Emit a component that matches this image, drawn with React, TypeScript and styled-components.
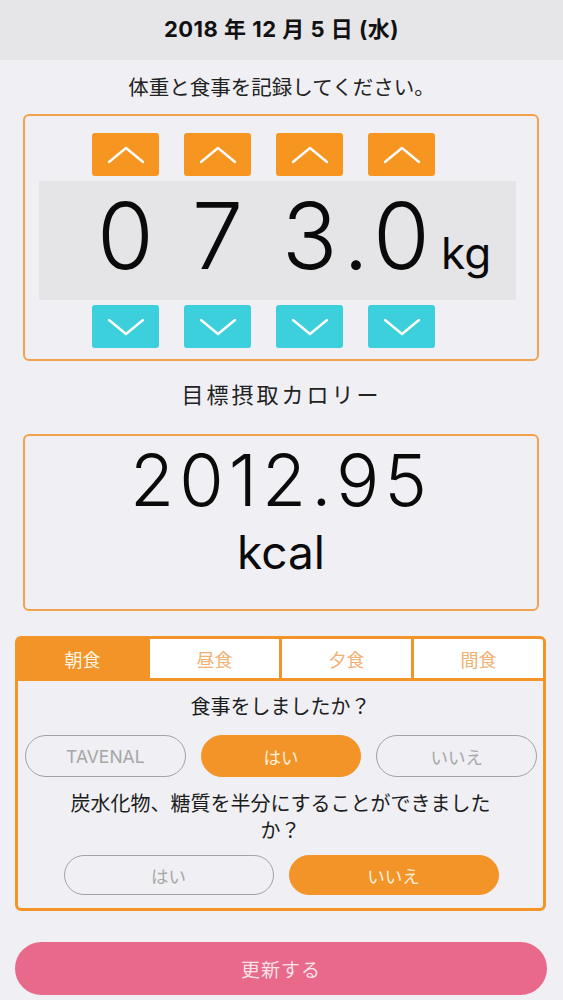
import styled, { createGlobalStyle } from 'styled-components'

// consts
const ORANGE = '#f6951f'
const ORANGE_BORDER = '#f1a24f'
const TAB_ORANGE = '#f39429'
const CYAN = '#3ccfdc'
const PINK = '#e9698b'
const PAGE_BG = '#efeff4'
const NUM_FONT = `"Inter", "Liberation Sans", sans-serif`
const JP_FONT = `"Inter", "Noto Sans CJK JP", sans-serif`

const GlobalStyle = createGlobalStyle`
  html, body {
    margin: 0;
    padding: 0;
    background: ${PAGE_BG};
  }

  body {
    font-family: ${JP_FONT};
    color: #1c1c1c;
  }

  * {
    box-sizing: border-box;
  }
`

const Page = styled.div`
  width: 563px;
  min-height: 1000px;
  background: ${PAGE_BG};
  display: flex;
  flex-direction: column;
`

const Header = styled.header`
  height: 60px;
  background: #e6e6e9;
  display: flex;
  align-items: center;
  justify-content: center;
  font-size: 22px;
  font-weight: 700;
  letter-spacing: 0.5px;
  padding-bottom: 6px;
  color: #111;
`

const Caption = styled.div<{ $size: number; $top: number; $spacing?: number }>`
  margin-top: ${(p) => p.$top}px;
  font-size: ${(p) => p.$size}px;
  line-height: 26px;
  letter-spacing: ${(p) => p.$spacing ?? 0}px;
  text-align: center;
  color: #222;
`

const WeightBox = styled.section`
  margin: 13px 24px 0 23px;
  border: 2px solid ${ORANGE_BORDER};
  border-radius: 6px;
  padding: 17px 21px 11px 14px;
  display: flex;
  flex-direction: column;
  gap: 5px;
`

const StepRow = styled.div`
  display: grid;
  grid-template-columns: repeat(4, 67px);
  column-gap: 25px;
  padding-left: 53px;
`

const StepButton = styled.button<{ $down?: boolean }>`
  height: 43px;
  border: none;
  border-radius: 3px;
  padding: 0;
  background: ${(p) => (p.$down ? CYAN : ORANGE)};
  display: flex;
  align-items: center;
  justify-content: center;
`

const Display = styled.div`
  height: 119px;
  background: #e5e5e8;
  padding: 9px 0 0 53px;
  display: grid;
  grid-template-columns: 67px 25px 67px 25px 67px 25px 67px auto;
  align-items: baseline;
  align-content: start;
`

const Digit = styled.span<{ $col: number }>`
  grid-column: ${(p) => p.$col};
  font-family: ${NUM_FONT};
  font-weight: 300;
  font-size: 92px;
  line-height: 92px;
  text-align: center;
  color: #0a0a0a;
`

const Unit = styled.span`
  grid-column: 8;
  margin-left: 6px;
  font-family: ${NUM_FONT};
  font-size: 44px;
  color: #0a0a0a;
`

const KcalBox = styled.section`
  margin: 26px 24px 0 23px;
  height: 177px;
  border: 2px solid ${ORANGE_BORDER};
  border-radius: 6px;
  padding-top: 8px;
  display: flex;
  flex-direction: column;
  align-items: center;
  font-family: ${NUM_FONT};
  color: #0a0a0a;

  .value {
    font-size: 72px;
    line-height: 72px;
    font-weight: 300;
    letter-spacing: 5px;
  }

  .unit {
    margin-top: 13px;
    font-size: 46px;
    line-height: 46px;
  }
`

const MealBox = styled.section`
  margin: 25px 17px 0 15px;
  border: 3px solid ${TAB_ORANGE};
  border-radius: 6px;
  overflow: hidden;
  padding-bottom: 13px;
`

const Tabs = styled.div`
  display: grid;
  grid-template-columns: repeat(4, 1fr);
  column-gap: 3px;
  background: ${TAB_ORANGE};
  padding-bottom: 3px;
`

const Tab = styled.div<{ $active?: boolean }>`
  height: 39px;
  display: flex;
  align-items: center;
  justify-content: center;
  font-size: 18px;
  background: ${(p) => (p.$active ? TAB_ORANGE : '#ffffff')};
  color: ${(p) => (p.$active ? '#fff3e2' : '#f2b073')};
`

const Question = styled.div<{ $top: number }>`
  margin: ${(p) => p.$top}px auto 0;
  max-width: 450px;
  font-size: 20px;
  line-height: 27px;
  text-align: center;
  color: #1c1c1c;
`

const ChoiceRow = styled.div<{ $cols: string; $top: number }>`
  margin-top: ${(p) => p.$top}px;
  display: grid;
  grid-template-columns: ${(p) => p.$cols};
  column-gap: 15px;
  justify-content: center;
  padding: 0 6px 0 7px;
`

const Choice = styled.button<{ $active?: boolean; $height: number }>`
  height: ${(p) => p.$height}px;
  border-radius: 999px;
  border: 1.5px solid ${(p) => (p.$active ? TAB_ORANGE : '#a3a3a3')};
  background: ${(p) => (p.$active ? TAB_ORANGE : 'transparent')};
  color: ${(p) => (p.$active ? '#fff1de' : '#a6a6a6')};
  font-family: ${JP_FONT};
  font-size: 17.5px;
  padding: 0;
`

const UpdateButton = styled.button`
  margin: 31px 16px 0 15px;
  height: 53px;
  border: none;
  border-radius: 27px;
  background: ${PINK};
  color: rgba(255, 255, 255, 0.82);
  font-family: ${JP_FONT};
  font-size: 19px;
  letter-spacing: 1px;
`

const Chevron = ({ down }: { down?: boolean }) => (
  <svg width="38" height="20" viewBox="0 0 38 20">
    <polyline
      points={down ? '2,3 19,17 36,3' : '2,17 19,3 36,17'}
      fill="none"
      stroke="#ffffff"
      strokeWidth="2.4"
      strokeLinecap="round"
      strokeLinejoin="round"
    />
  </svg>
)

const meals = ['朝食', '昼食', '夕食', '間食']

export default function App() {
  return (
    <Page>
      <GlobalStyle />
      <Header>2018 年 12 月 5 日 (水)</Header>

      <Caption $size={20.5} $top={15}>
        体重と食事を記録してください。
      </Caption>

      <WeightBox>
        <StepRow>
          {[0, 1, 2, 3].map((i) => (
            <StepButton key={i}>
              <Chevron />
            </StepButton>
          ))}
        </StepRow>
        <Display>
          <Digit $col={1}>0</Digit>
          <Digit $col={3}>7</Digit>
          <Digit $col={5}>3</Digit>
          <Digit $col={6}>.</Digit>
          <Digit $col={7}>0</Digit>
          <Unit>kg</Unit>
        </Display>
        <StepRow>
          {[0, 1, 2, 3].map((i) => (
            <StepButton key={i} $down>
              <Chevron down />
            </StepButton>
          ))}
        </StepRow>
      </WeightBox>

      <Caption $size={22} $top={21} $spacing={3}>
        目標摂取カロリー
      </Caption>

      <KcalBox>
        <div className="value">2012.95</div>
        <div className="unit">kcal</div>
      </KcalBox>

      <MealBox>
        <Tabs>
          {meals.map((m, i) => (
            <Tab key={m} $active={i === 0}>
              {m}
            </Tab>
          ))}
        </Tabs>

        <Question $top={13}>食事をしましたか？</Question>
        <ChoiceRow $cols="repeat(3, 1fr)" $top={14}>
          <Choice $height={42}>TAVENAL</Choice>
          <Choice $height={42} $active>
            はい
          </Choice>
          <Choice $height={42}>いいえ</Choice>
        </ChoiceRow>

        <Question $top={14}>炭水化物、糖質を半分にすることができましたか？</Question>
        <ChoiceRow $cols="210px 210px" $top={10}>
          <Choice $height={40}>はい</Choice>
          <Choice $height={40} $active>
            いいえ
          </Choice>
        </ChoiceRow>
      </MealBox>

      <UpdateButton>更新する</UpdateButton>
    </Page>
  )
}
